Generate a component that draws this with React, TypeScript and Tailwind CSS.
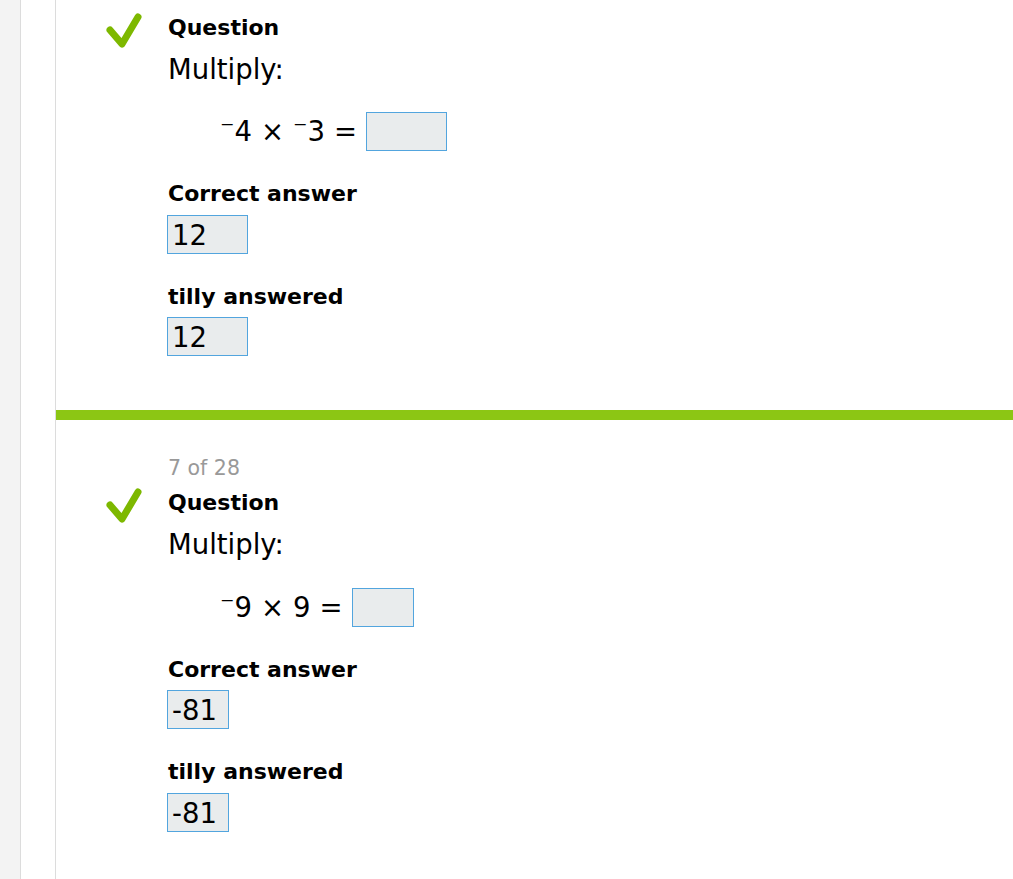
type Item = {
  counter?: string;
  left: string;
  right: string;
  boxW: string;
  correct: string;
  answered: string;
};

const items: Item[] = [
  { left: '4', right: '3', boxW: 'w-[81px]', correct: '12', answered: '12' },
  { counter: '7 of 28', left: '9', right: '', boxW: 'w-[62px]', correct: '-81', answered: '-81' },
];

function Check() {
  return (
    <svg width="36" height="36" viewBox="0 0 36 36" className="shrink-0 -mt-[2px]">
      <path
        d="M4 17 L16 31 L32 4"
        fill="none"
        stroke="#7db800"
        strokeWidth="7"
        strokeLinecap="round"
        strokeLinejoin="round"
      />
    </svg>
  );
}

// negative number with a raised minus sign
function Neg({ n }: { n: string }) {
  return (
    <span>
      <span className="inline-block -translate-y-[2px]">⁻</span>
      {n}
    </span>
  );
}

function AnswerBox({ w, value }: { w: string; value?: string }) {
  return (
    <div
      className={`${w} h-[39px] bg-[#e9eced] border border-[#52a5de] pl-[4px] text-[27.5px] leading-[38px]`}
    >
      {value}
    </div>
  );
}

function QuestionBlock({ item }: { item: Item }) {
  const second = !!item.counter;
  return (
    <div className="flex flex-col">
      {item.counter && (
        <div className="pl-[112px] text-[20.5px] leading-[24px] text-[#999999] mt-[36px]">
          {item.counter}
        </div>
      )}
      <div className={`flex h-[26px] ${second ? 'mt-[10px]' : 'mt-[15px]'}`}>
        <div className="w-[112px] pl-[50px] h-[26px]">
          <Check />
        </div>
        <div className="text-[22px] leading-[26px] font-bold">Question</div>
      </div>
      <div className="pl-[112px] mt-[12px] text-[27.5px] leading-[32px]">Multiply:</div>
      <div
        className={`pl-[164px] ${second ? 'mt-[28px]' : 'mt-[27px]'} flex items-center gap-[9px] text-[27.5px] leading-[39px]`}
      >
        <Neg n={item.left} />
        <span>×</span>
        {item.right ? <Neg n={item.right} /> : <span>9</span>}
        <span>=</span>
        <AnswerBox w={item.boxW} />
      </div>
      <div className="pl-[112px] mt-[30px] text-[22px] leading-[26px] font-bold">Correct answer</div>
      <div className={`pl-[111px] ${second ? 'mt-[7px]' : 'mt-[8px]'}`}>
        <AnswerBox w={item.boxW} value={item.correct} />
      </div>
      <div className="pl-[112px] mt-[30px] text-[22px] leading-[26px] font-bold">tilly answered</div>
      <div className={`pl-[111px] ${second ? 'mt-[8px]' : 'mt-[7px]'}`}>
        <AnswerBox w={item.boxW} value={item.answered} />
      </div>
    </div>
  );
}

export default function App() {
  return (
    <div className="flex min-h-[879px] bg-white text-black font-['DejaVu_Sans','Liberation_Sans',sans-serif]">
      <div className="w-[21px] shrink-0 bg-[#f3f3f3] border-r border-[#dcdcdc]" />
      <div className="w-[35px] shrink-0 border-r border-[#dcdcdc]" />
      <div className="flex-1 flex flex-col">
        <QuestionBlock item={items[0]} />
        <div className="h-[10px] bg-[#8cc614] mt-[54px]" />
        <QuestionBlock item={items[1]} />
      </div>
    </div>
  );
}
